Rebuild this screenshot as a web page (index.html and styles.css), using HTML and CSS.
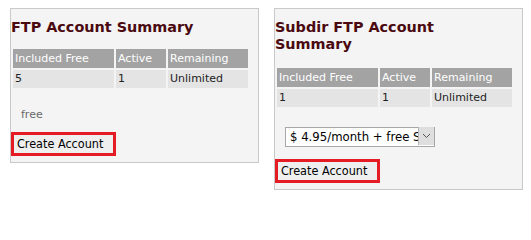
FILE: index.html
```html
<!DOCTYPE html>
<html>
<head>
<meta charset="utf-8">
<link rel="stylesheet" href="styles.css">
</head>
<body>
<div class="panels">
  <section class="panel">
    <h2 class="panel-title">FTP Account Summary</h2>
    <table class="summary">
      <colgroup><col class="c1"><col class="c2"><col class="c3"></colgroup>
      <tr><th>Included Free</th><th>Active</th><th>Remaining</th></tr>
      <tr><td>5</td><td>1</td><td>Unlimited</td></tr>
    </table>
    <p class="note">free</p>
    <button class="create" type="button">Create Account</button>
  </section>
  <section class="panel">
    <h2 class="panel-title narrow">Subdir FTP Account Summary</h2>
    <table class="summary">
      <colgroup><col class="c1"><col class="c2"><col class="c3"></colgroup>
      <tr><th>Included Free</th><th>Active</th><th>Remaining</th></tr>
      <tr><td>1</td><td>1</td><td>Unlimited</td></tr>
    </table>
    <div class="select-wrap">
      <select class="plan"><option>$ 4.95/month + free Subdir FTP</option></select>
      <span class="arrow"><svg width="9" height="6" viewBox="0 0 9 6"><path d="M1 1 L4.5 4.5 L8 1" fill="none" stroke="#555" stroke-width="1"/></svg></span>
    </div>
    <button class="create" type="button">Create Account</button>
  </section>
</div>
</body>
</html>
```
FILE: styles.css
```css
html, body {
  margin: 0;
  padding: 0;
  background: #ffffff;
}
.panels {
  display: flex;
  align-items: flex-start;
  gap: 15px;
  padding: 8px 0 0 10px;
  font-family: "DejaVu Sans", Verdana, sans-serif;
}
.panel {
  width: 249px;
  box-sizing: border-box;
  background: #f4f4f4;
  border: 1px solid #c9c9c9;
  padding: 0 0 6px 0;
}
.panel-title {
  margin: 10px 0 11px 0;
  font-size: 14.4px;
  line-height: 17px;
  font-weight: bold;
  color: #4a0a10;
}
.panel-title.narrow {
  max-width: 215px;
  margin-bottom: 13px;
}
.summary {
  border-collapse: separate;
  border-spacing: 2px;
  table-layout: fixed;
  width: 239px;
  font-size: 11px;
  line-height: 13px;
}
.c1 { width: 101px; }
.c2 { width: 50px; }
.c3 { width: 80px; }
.summary th {
  background: #a3a3a3;
  color: #ffffff;
  font-weight: normal;
  text-align: left;
  padding: 3px 2px;
  white-space: nowrap;
}
.summary td {
  background: #e4e4e4;
  color: #222222;
  padding: 2px 2px 3px 2px;
}
.note {
  margin: 18px 0 11px 10px;
  font-size: 11px;
  line-height: 13px;
  color: #6a6a6a;
}
.create {
  display: block;
  box-sizing: border-box;
  width: 105px;
  height: 24px;
  margin: 0;
  padding: 0 0 0 3px;
  text-align: left;
  border: 3px solid #e51c24;
  background: #efefef;
  color: #000;
  font-family: "DejaVu Sans Condensed", "DejaVu Sans", sans-serif;
  font-stretch: condensed;
  font-size: 12.5px;
  line-height: 18px;
}
.select-wrap {
  position: relative;
  width: 150px;
  height: 20px;
  margin: 17px 0 13px 10px;
}
.plan {
  appearance: none;
  -webkit-appearance: none;
  box-sizing: border-box;
  width: 150px;
  height: 20px;
  margin: 0;
  padding: 0 0 0 4px;
  border: 1px solid #a7a7a7;
  border-radius: 0;
  background: #ffffff;
  color: #000;
  font-family: "DejaVu Sans Condensed", "DejaVu Sans", sans-serif;
  font-stretch: condensed;
  font-size: 13px;
}
.arrow {
  position: absolute;
  top: 1px;
  right: 1px;
  width: 16px;
  height: 18px;
  box-sizing: border-box;
  border-left: 1px solid #b4b4b4;
  background: #dedede;
  display: flex;
  align-items: center;
  justify-content: center;
}
```
